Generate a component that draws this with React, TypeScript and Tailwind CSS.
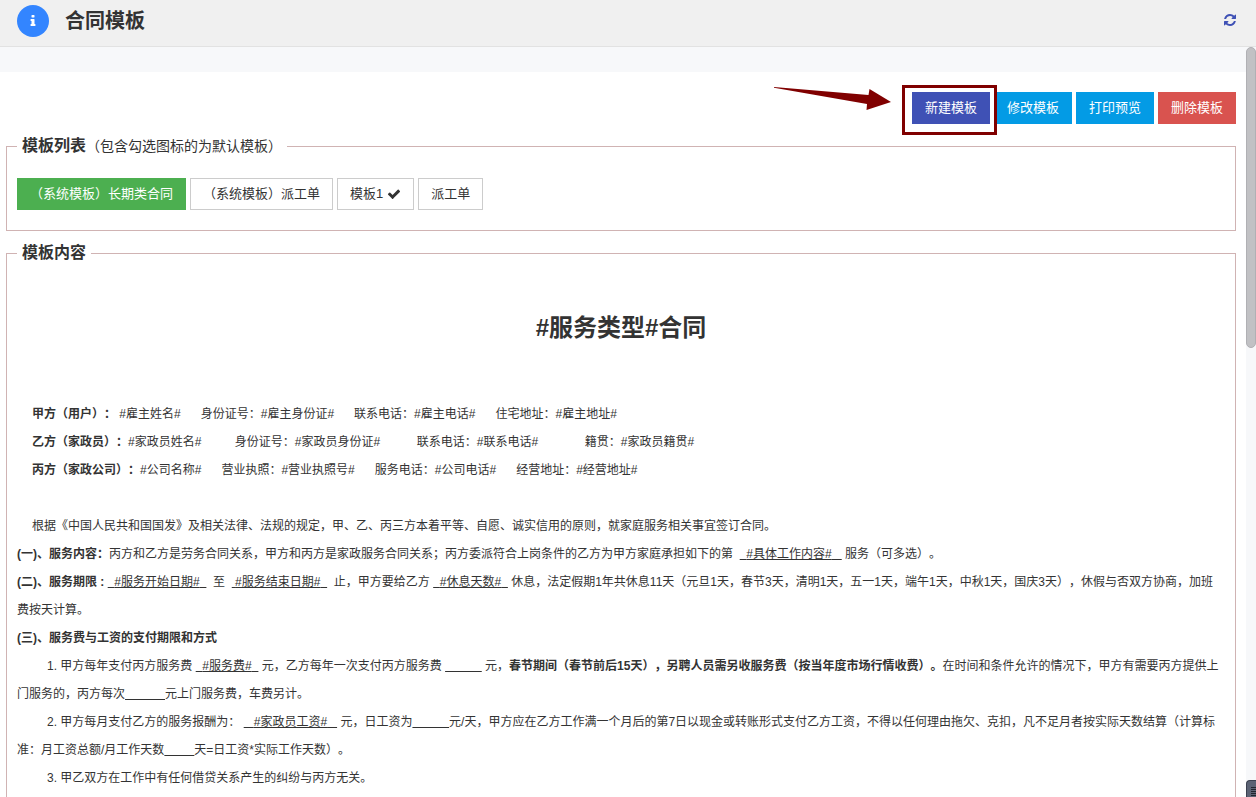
import { ReactNode, useState } from "react";

const templates = [
  { name: "（系统模板）长期类合同", isDefault: false },
  { name: "（系统模板）派工单", isDefault: false },
  { name: "模板1", isDefault: true },
  { name: "派工单", isDefault: false },
];

function InfoIcon() {
  return (
    <svg viewBox="0 0 1792 1792" className="w-3.5 h-3.5" fill="currentColor" aria-hidden="true">
      <path d="M1216 1344v128q0 26-19 45t-45 19h-512q-26 0-45-19t-19-45v-128q0-26 19-45t45-19h64v-384h-64q-26 0-45-19t-19-45v-128q0-26 19-45t45-19h384q26 0 45 19t19 45v576h64q26 0 45 19t19 45zm-128-1152v192q0 26-19 45t-45 19h-256q-26 0-45-19t-19-45v-192q0-26 19-45t45-19h256q26 0 45 19t19 45z" />
    </svg>
  );
}

function RefreshIcon() {
  return (
    <svg viewBox="0 0 1792 1792" className="w-3.5 h-3.5" fill="currentColor" aria-hidden="true">
      <path d="M1639 1056q0 5-1 7-64 268-268 434.5t-478 166.5q-146 0-282.5-55t-243.5-157l-129 129q-19 19-45 19t-45-19-19-45v-448q0-26 19-45t45-19h448q26 0 45 19t19 45-19 45l-137 137q71 66 161 102t187 36q134 0 250-65t186-179q11-17 53-117 8-23 30-23h192q13 0 22.5 9.5t9.5 22.5zm25-800v448q0 26-19 45t-45 19h-448q-26 0-45-19t-19-45 19-45l138-138q-148-137-349-137-134 0-250 65t-186 179q-11 17-53 117-8 23-30 23h-199q-13 0-22.5-9.5t-9.5-22.5v-7q65-268 270-434.5t480-166.5q146 0 284 55.5t245 156.5l130-129q19-19 45-19t45 19 19 45z" />
    </svg>
  );
}

function CheckIcon() {
  return (
    <svg viewBox="0 0 1792 1792" className="w-3.5 h-3.5" fill="currentColor" aria-label="默认模板">
      <path d="M1671 566q0 40-28 68l-724 724-136 136q-28 28-68 28t-68-28l-136-136-362-362q-28-28-28-68t28-68l136-136q28-28 68-28t68 28l294 295 656-657q28-28 68-28t68 28l136 136q28 28 28 68z" />
    </svg>
  );
}

// n non-breaking spaces, used for the gaps and blanks of the form
function Sp({ n }: { n: number }) {
  return <>{"\u00a0".repeat(n)}</>;
}

function Blank({ before, after = 0, children }: { before: number; after?: number; children?: ReactNode }) {
  return (
    <u className="underline underline-offset-1">
      <Sp n={before} />
      {children}
      <Sp n={after} />
    </u>
  );
}

function Header() {
  return (
    <header className="flex items-center h-[47px] shrink-0 pl-[17px] pr-[19px] pb-1 bg-[#f0f0f0] border-b border-[#e2e2e2]">
      <span className="flex items-center justify-center w-8 h-8 rounded-full bg-[#3385ff] text-white">
        <InfoIcon />
      </span>
      <h1 className="ml-4 text-xl font-bold">合同模板</h1>
      <button className="ml-auto pb-0.5 text-[#3f51b5]" aria-label="刷新">
        <RefreshIcon />
      </button>
    </header>
  );
}

function Toolbar() {
  return (
    <div className="flex justify-end gap-1 text-[13px] text-white">
      <div className="relative">
        <button className="h-8 px-[13px] bg-[#3f51b5]">新建模板</button>
        <div className="absolute -left-[10px] -top-[7px] w-[95px] h-[50px] border-3 border-[#800000] pointer-events-none" />
        <svg
          viewBox="0 0 118 24"
          className="absolute right-[99px] -top-[6px] w-[118px] h-6 pointer-events-none"
          aria-hidden="true"
        >
          <path d="M1 1L95.500 9L96.500 3L118 16L93.500 24L94 18L1 1.800Z" fill="#800000" />
        </svg>
      </div>
      <button className="h-8 px-[13px] bg-[#039be5]">修改模板</button>
      <button className="h-8 px-[13px] bg-[#039be5]">打印预览</button>
      <button className="h-8 px-[13px] bg-[#d9534f]">删除模板</button>
    </div>
  );
}

function TemplateList() {
  const [active, setActive] = useState(0);
  return (
    <fieldset className="border border-[#d0b3b3] px-2.5 pb-5">
      <legend className="px-[5px] text-sm leading-6">
        <b className="text-base leading-6">模板列表</b>（包含勾选图标的为默认模板）
      </legend>
      <div className="flex flex-wrap gap-1 pt-5">
        {templates.map((t, i) => (
          <button
            key={t.name}
            onClick={() => setActive(i)}
            className={`flex items-center gap-1 h-8 px-3 border text-[13px] ${
              i === active ? "bg-[#4caf50] border-[#4caf50] text-white" : "bg-white border-[#ccc]"
            }`}
          >
            {t.name}
            {t.isDefault && <CheckIcon />}
          </button>
        ))}
      </div>
    </fieldset>
  );
}

function Contract() {
  return (
    <fieldset className="mt-2.5 border border-[#d0b3b3] px-2.5 pb-5">
      <legend className="px-[5px] text-base leading-6 font-bold">模板内容</legend>
      <article className="text-xs leading-7">
        <h2 className="pt-[45px] pb-[54px] text-2xl leading-9 font-bold text-center">#服务类型#合同</h2>
        <p className="indent-[15px]">
          <b>甲方（用户）：</b> #雇主姓名#<Sp n={6} />身份证号：#雇主身份证#<Sp n={6} />联系电话：#雇主电话#<Sp n={6} />住宅地址：#雇主地址#
        </p>
        <p className="indent-[15px]">
          <b>乙方（家政员）：</b>#家政员姓名#<Sp n={10} />身份证号：#家政员身份证#<Sp n={11} />联系电话：#联系电话#<Sp n={14} />籍贯：#家政员籍贯#
        </p>
        <p className="indent-[15px]">
          <b>丙方（家政公司）：</b>#公司名称#<Sp n={6} />营业执照：#营业执照号#<Sp n={6} />服务电话：#公司电话#<Sp n={6} />经营地址：#经营地址#
        </p>
        <p className="pt-7 indent-[15px]">
          根据《中国人民共和国国发》及相关法律、法规的规定，甲、乙、丙三方本着平等、自愿、诚实信用的原则，就家庭服务相关事宜签订合同。
        </p>
        <p>
          <b>(一)、服务内容：</b>丙方和乙方是劳务合同关系，甲方和丙方是家政服务合同关系；丙方委派符合上岗条件的乙方为甲方家庭承担如下的第<Sp n={2} />
          <Blank before={2} after={3}>#具体工作内容#</Blank> 服务（可多选）。
        </p>
        <p>
          <b>(二)、服务期限<Sp n={1} />:<Sp n={1} /></b>
          <Blank before={2} after={2}>#服务开始日期#</Blank><Sp n={2} />至<Sp n={2} />
          <Blank before={1} after={2}>#服务结束日期#</Blank><Sp n={2} />止，甲方要给乙方<Sp n={1} />
          <Blank before={2} after={2}>#休息天数#</Blank> 休息，法定假期1年共休息11天（元旦1天，春节3天，清明1天，五一1天，端午1天，中秋1天，国庆3天），休假与否双方协商，加班费按天计算。
        </p>
        <p>
          <b>(三)、服务费与工资的支付期限和方式</b>
        </p>
        <p className="indent-[30px]">
          1. 甲方每年支付丙方服务费<Sp n={1} />
          <Blank before={2} after={2}>#服务费#</Blank> 元，乙方每年一次支付丙方服务费<Sp n={1} />
          <Blank before={11} /> 元，<b>春节期间（春节前后15天），另聘人员需另收服务费（按当年度市场行情收费）。</b>在时间和条件允许的情况下，甲方有需要丙方提供上门服务的，丙方每次<Blank before={12} />元上门服务费，车费另计。
        </p>
        <p className="indent-[30px]">
          2. 甲方每月支付乙方的服务报酬为：<Sp n={1} />
          <Blank before={3} after={3}>#家政员工资#</Blank> 元，日工资为<Blank before={11} />元/天，甲方应在乙方工作满一个月后的第7日以现金或转账形式支付乙方工资，不得以任何理由拖欠、克扣，凡不足月者按实际天数结算（计算标准：月工资总额/月工作天数<Blank before={9} />天=日工资*实际工作天数）。
        </p>
        <p className="indent-[30px]">3. 甲乙双方在工作中有任何借贷关系产生的纠纷与丙方无关。</p>
      </article>
    </fieldset>
  );
}

function Scrollbar() {
  return (
    <div className="flex flex-col justify-between w-2.5 shrink-0 bg-[#f7f8fa]" aria-hidden="true">
      <div className="h-[301px] rounded-full bg-[#c1c1c4] border border-[#b0b0b4]" />
      <div className="flex flex-col gap-px h-[17px] pt-1.5 pl-1 rounded-tl bg-[#5c6375] border-t border-l border-[#3b4150]">
        <i className="h-px bg-[#22262f]" />
        <i className="h-px bg-[#22262f]" />
        <i className="h-px bg-[#22262f]" />
        <i className="h-px bg-[#22262f]" />
        <i className="h-px bg-[#22262f]" />
      </div>
    </div>
  );
}

export default function App() {
  return (
    <div className="flex flex-col h-screen overflow-hidden bg-white text-[#333] font-['Liberation_Sans','Noto_Sans_CJK_SC',sans-serif] [text-spacing-trim:space-all]">
      <Header />
      <div className="flex flex-1 min-h-0">
        <main className="flex-1 min-w-0 overflow-y-auto [scrollbar-width:none]">
          <div className="h-[25px] bg-[#f7f8fa]" />
          <div className="pt-5 pl-1.5 pr-2.5">
            <Toolbar />
            <div className="pt-2.5">
              <TemplateList />
              <Contract />
            </div>
          </div>
        </main>
        <Scrollbar />
      </div>
    </div>
  );
}
